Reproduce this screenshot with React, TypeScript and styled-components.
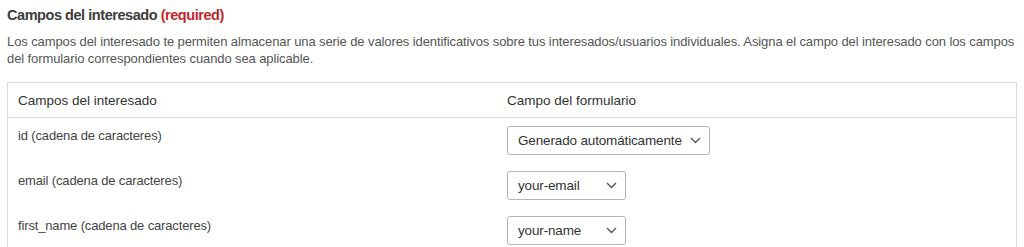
import React from 'react'
import styled, { createGlobalStyle } from 'styled-components'

const GlobalStyle = createGlobalStyle`
    body {
        margin: 0;
        background: #fff;
        font-family: 'Liberation Sans', Arial, sans-serif;
        color: #444;
    }
`

const Section = styled.section`
    padding: 6px 7px 0 7px;
`

const Title = styled.h3`
    margin: 0;
    font-size: 14.5px;
    line-height: 18px;
    letter-spacing: -0.45px;
    font-weight: 700;
    color: #3c3c3c;
`

const Required = styled.span`
    color: #c0272d;
`

const Description = styled.p`
    margin: 9px 0 0 0;
    font-size: 13px;
    line-height: 17px;
    letter-spacing: -0.1px;
    color: #555;
`

const Table = styled.div`
    margin-top: 15px;
    border: 1px solid #dcdcdc;
    border-bottom: none;
`

const Row = styled.div<{ $header?: boolean }>`
    display: grid;
    grid-template-columns: 489px 1fr;
    min-height: ${(p) => (p.$header ? '34px' : '45px')};
    border-bottom: ${(p) => (p.$header ? '1px solid #dcdcdc' : 'none')};
    align-items: ${(p) => (p.$header ? 'center' : 'start')};
`

const Cell = styled.div<{ $header?: boolean }>`
    padding: ${(p) => (p.$header ? '0 10px' : '9px 10px 0 10px')};
    font-size: ${(p) => (p.$header ? '13.5px' : '13px')};
    line-height: 17px;
    color: ${(p) => (p.$header ? '#333' : '#444')};
    letter-spacing: ${(p) => (p.$header ? '0' : '-0.15px')};
`

const SelectBox = styled.div<{ $width: number }>`
    display: flex;
    align-items: center;
    justify-content: space-between;
    box-sizing: border-box;
    width: ${(p) => p.$width}px;
    height: 29px;
    padding: 0 8px 0 10px;
    border: 1px solid #b5b5b5;
    border-radius: 3px;
    font-size: 13.5px;
    white-space: nowrap;
    color: #333;
    margin-top: -1px;
`

const Chevron = () => (
    <svg width="11" height="7" viewBox="0 0 11 7" fill="none">
        <path d="M1 1l4.5 4.5L10 1" stroke="#555" strokeWidth="1.4" />
    </svg>
)

const rows = [
    { name: 'id (cadena de caracteres)', value: 'Generado automáticamente', width: 203 },
    { name: 'email (cadena de caracteres)', value: 'your-email', width: 119 },
    { name: 'first_name (cadena de caracteres)', value: 'your-name', width: 119 },
]

const App = () => {
    return (
        <>
            <GlobalStyle />
            <Section>
                <Title>
                    Campos del interesado <Required>(required)</Required>
                </Title>
                <Description>
                    Los campos del interesado te permiten almacenar una serie de valores identificativos sobre tus
                    interesados/usuarios individuales. Asigna el campo del interesado con los campos del formulario
                    correspondientes cuando sea aplicable.
                </Description>
                <Table>
                    <Row $header>
                        <Cell $header>Campos del interesado</Cell>
                        <Cell $header>Campo del formulario</Cell>
                    </Row>
                    {rows.map((r) => (
                        <Row key={r.name}>
                            <Cell>{r.name}</Cell>
                            <Cell>
                                <SelectBox $width={r.width}>
                                    <span>{r.value}</span>
                                    <Chevron />
                                </SelectBox>
                            </Cell>
                        </Row>
                    ))}
                </Table>
            </Section>
        </>
    )
}

export default App
